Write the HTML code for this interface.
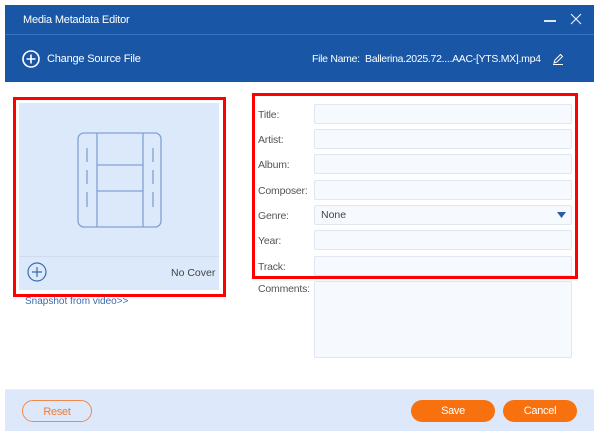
<!DOCTYPE html>
<html><head><meta charset="utf-8"><style>
*{box-sizing:border-box;margin:0;padding:0}
body{width:600px;height:438px;background:#fff;font-family:"Liberation Sans",sans-serif;position:relative;overflow:hidden;font-size:11px;color:#444}
.a{position:absolute}
.top{left:5px;top:5px;width:589px;height:77px;background:#1a56a6}
.inp{position:absolute;left:314px;width:258px;height:20px;background:#f6f9fe;border:1px solid #dfe7f2;border-radius:2px}
.lab{position:absolute;left:258px;font-size:10.5px;color:#555;letter-spacing:-0.2px}
.btn{position:absolute;top:400px;height:22px;border-radius:11px;text-align:center;line-height:22px;font-size:11px;letter-spacing:-0.3px}
</style></head><body>
<div class="a top"></div>
<div class="a" style="left:5px;top:34px;width:589px;height:1px;background:#3a72bd"></div>
<div class="a" style="left:23px;top:14px;color:#fff;font-size:11px;letter-spacing:-0.2px">Media Metadata Editor</div>
<div class="a" style="left:544px;top:20px;width:12px;height:1.5px;background:#dce6f5"></div>
<svg class="a" style="left:570px;top:13px" width="12" height="12"><path d="M1 1L11 11M11 1L1 11" stroke="#e6eef8" stroke-width="1.2"/></svg>
<svg class="a" style="left:22px;top:50px" width="18" height="18"><circle cx="9" cy="9" r="8" fill="none" stroke="#fff" stroke-width="1.6"/><path d="M9 4.5V13.5M4.5 9H13.5" stroke="#fff" stroke-width="1.6"/></svg>
<div class="a" style="left:47px;top:53px;color:#fff;font-size:11px;letter-spacing:-0.2px">Change Source File</div>
<div class="a" style="left:312px;top:53px;color:#fff;font-size:10.5px;letter-spacing:-0.3px">File Name:&nbsp; Ballerina.2025.72....AAC-[YTS.MX].mp4</div>
<svg class="a" style="left:552px;top:53px" width="12" height="12"><path d="M2 10L3 7L8.5 1.5L10.5 3.5L5 9Z M1 11.5H11" fill="none" stroke="#fff" stroke-width="1"/></svg>

<div class="a" style="left:13px;top:97px;width:213px;height:200px;border:3px solid #f00"></div>
<div class="a" style="left:19px;top:103px;width:200px;height:187px;background:#dce9fa"></div>
<div class="a" style="left:19px;top:256px;width:200px;height:1px;background:#cfdcef"></div>
<svg class="a" style="left:77px;top:132px" width="86" height="97" fill="none" stroke="#7fa2d3" stroke-width="1.3"><rect x="1" y="1" width="83" height="94" rx="6"/><path d="M20 1V95M66 1V95M20 33H66M20 59H66M10 16V30M10 38V52M10 60V75M76 16V30M76 38V52M76 60V75"/></svg>
<svg class="a" style="left:27px;top:262px" width="20" height="20"><circle cx="10" cy="10" r="9" fill="none" stroke="#3a6bb0" stroke-width="1.2"/><path d="M10 5V15M5 10H15" stroke="#3a6bb0" stroke-width="1.2"/></svg>
<div class="a" style="left:171px;top:267px;font-size:10.5px;color:#444">No Cover</div>
<div class="a" style="left:25px;top:296px;font-size:10px;color:#3a6bb0">Snapshot from video&gt;&gt;</div>

<div class="a" style="left:252px;top:93px;width:326px;height:186px;border:3px solid #f00"></div>
<div class="lab" style="top:109px">Title:</div><div class="inp" style="top:104px"></div>
<div class="lab" style="top:134px">Artist:</div><div class="inp" style="top:129px"></div>
<div class="lab" style="top:159px">Album:</div><div class="inp" style="top:154px"></div>
<div class="lab" style="top:185px">Composer:</div><div class="inp" style="top:180px"></div>
<div class="lab" style="top:210px">Genre:</div><div class="inp" style="top:205px"><span style="position:absolute;left:6px;top:3px;font-size:10.5px;color:#444">None</span><svg style="position:absolute;right:5px;top:6px" width="9" height="6"><path d="M0 0H9L4.5 6Z" fill="#2b5ca8"/></svg></div>
<div class="lab" style="top:235px">Year:</div><div class="inp" style="top:230px"></div>
<div class="lab" style="top:261px">Track:</div><div class="inp" style="top:256px"></div>
<div class="lab" style="top:283px">Comments:</div><div class="inp" style="top:281px;height:77px"></div>

<div class="a" style="left:5px;top:389px;width:589px;height:1px;background:#edf2f9"></div>
<div class="a" style="left:5px;top:390px;width:589px;height:41px;background:#dde9fa"></div>
<div class="btn" style="left:22px;width:70px;border:1px solid #f08a4a;color:#f07a30">Reset</div>
<div class="btn" style="left:411px;width:84px;background:#f7720f;color:#fff">Save</div>
<div class="btn" style="left:503px;width:74px;background:#f7720f;color:#fff">Cancel</div>
</body></html>
